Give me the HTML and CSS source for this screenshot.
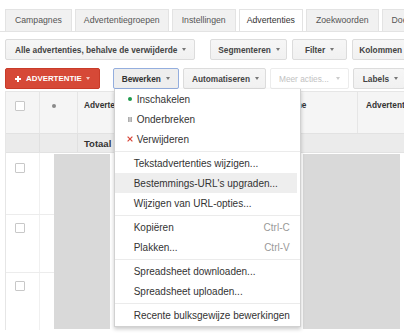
FILE: index.html
```html
<!DOCTYPE html>
<html lang="nl">
<head>
<meta charset="utf-8">
<link rel="stylesheet" href="styles.css">
</head>
<body>
<div class="page">
  <div class="tabs">
    <div class="tab">Campagnes</div>
    <div class="tab narrow">Advertentiegroepen</div>
    <div class="tab">Instellingen</div>
    <div class="tab active">Advertenties</div>
    <div class="tab">Zoekwoorden</div>
    <div class="tab">Doelgroepen</div>
  </div>

  <div class="toolbar first">
    <div class="btn b-alle">Alle advertenties, behalve de verwijderde<span class="caret"></span></div>
    <div class="btn b-seg spaced">Segmenteren<span class="caret"></span></div>
    <div class="btn b-filter">Filter<span class="caret"></span></div>
    <div class="btn b-kol">Kolommen<span class="caret"></span></div>
  </div>

  <div class="toolbar second">
    <div class="btn red"><svg class="plus" width="6" height="6" viewBox="0 0 6 6"><rect x="2" y="0" width="2" height="6" fill="#fff"/><rect x="0" y="2" width="6" height="2" fill="#fff"/></svg>ADVERTENTIE<span class="caret light"></span></div>
    <div class="dd spaced">
      <div class="btn selected">Bewerken<span class="caret"></span></div>
      <div class="menu">
        <div class="item ic"><span class="ico"><svg width="4" height="4" viewBox="0 0 4 4"><circle cx="2" cy="2" r="2" fill="#1e9a4c"/></svg></span>Inschakelen</div>
        <div class="item ic"><span class="ico"><svg width="4" height="5" viewBox="0 0 4 5"><rect x="0.3" y="0" width="1.2" height="5" fill="#8a8a8a"/><rect x="2.5" y="0" width="1.2" height="5" fill="#8a8a8a"/></svg></span>Onderbreken</div>
        <div class="item ic"><span class="ico x"><svg width="6" height="6" viewBox="0 0 6 6"><path d="M0.6 0.6 L5.4 5.4 M5.4 0.6 L0.6 5.4" stroke="#d8473a" stroke-width="1.2" fill="none"/></svg></span>Verwijderen</div>
        <div class="sep"></div>
        <div class="item">Tekstadvertenties wijzigen...</div>
        <div class="item hover">Bestemmings-URL's upgraden...</div>
        <div class="item">Wijzigen van URL-opties...</div>
        <div class="sep"></div>
        <div class="item"><span class="lbl">Kopiëren</span><span class="key">Ctrl-C</span></div>
        <div class="item"><span class="lbl">Plakken...</span><span class="key">Ctrl-V</span></div>
        <div class="sep"></div>
        <div class="item">Spreadsheet downloaden...</div>
        <div class="item">Spreadsheet uploaden...</div>
        <div class="sep"></div>
        <div class="item">Recente bulksgewijze bewerkingen</div>
      </div>
    </div>
    <div class="btn b-auto">Automatiseren<span class="caret"></span></div>
    <div class="btn disabled">Meer acties...<span class="caret"></span></div>
    <div class="btn b-labels">Labels<span class="caret"></span></div>
  </div>

  <div class="table">
    <div class="thead">
      <div class="th c1"><span class="cb"></span></div>
      <div class="th c2"><span class="dot"></span></div>
      <div class="th c3">Advertentie</div>
      <div class="th c4">Campagne</div>
      <div class="th c5">Advertentiegroep</div>
    </div>
    <div class="total">
      <div class="tc c1"></div>
      <div class="tc c2"></div>
      <div class="tc c3">Totaal</div>
    </div>
    <div class="tbody">
      <div class="rows">
        <div class="row r1"><div class="td c1"><span class="cb"></span></div><div class="td c2s"></div></div>
        <div class="row r2"><div class="td c1"><span class="cb"></span></div><div class="td c2s"></div></div>
        <div class="row r3"><div class="td c1"><span class="cb"></span></div><div class="td c2s"></div></div>
      </div>
      <div class="ph ph-left"></div>
      <div class="blank"></div>
      <div class="ph ph-right"></div>
    </div>
  </div>
</div>
</body>
</html>
```

FILE: styles.css
```css
* { box-sizing: border-box; }
html, body {
  margin: 0;
  padding: 0;
  background: #fff;
}
body {
  width: 404px;
  height: 334px;
  overflow: hidden;
  font-family: "Liberation Sans", Arial, sans-serif;
  color: #444;
}
.page {
  width: 404px;
  height: 334px;
  overflow: hidden;
}

/* Tabs */
.tabs {
  display: flex;
  gap: 3px;
  margin-top: 9px;
  padding-left: 5px;
  height: 23px;
  border-bottom: 1px solid #e3e3e3;
  white-space: nowrap;
  overflow: hidden;
}
.tab {
  flex-shrink: 0;
  height: 22px;
  line-height: 21px;
  padding: 0 9px;
  font-size: 8.7px;
  color: #555;
  background: #f1f1f1;
  border: 1px solid #e3e3e3;
  border-bottom: none;
}
.tab.narrow { padding: 0 8px; }
.tab.active {
  background: #fff;
  color: #333;
  height: 23px;
  padding: 0 7px;
  margin-bottom: -1px;
}

/* Toolbars */
.toolbar {
  display: flex;
  gap: 5px;
  padding-left: 5px;
  height: 21px;
  white-space: nowrap;
}
.toolbar.first { margin-top: 7px; }
.toolbar.second { margin-top: 8px; gap: 4px; }
.spaced { margin-left: 9px; }
.toolbar.first .spaced { margin-left: 10px; }

.btn {
  flex-shrink: 0;
  display: flex;
  align-items: center;
  height: 21px;
  padding: 0 8px 0 9px;
  font-size: 8.3px;
  font-weight: bold;
  color: #444;
  background: linear-gradient(#f6f6f6, #f1f1f1);
  border: 1px solid #dcdcdc;
  border-radius: 2px;
}
.b-seg { padding: 0 6px 0 7px; }
.b-filter { padding: 0 12px 0 12px; }
.b-kol { padding: 0 8px 0 6px; }
.b-auto { padding: 0 6px 0 8px; }
.b-labels { padding: 0 6px 0 9px; }
.caret {
  display: inline-block;
  width: 0;
  height: 0;
  margin-left: 5px;
  border-left: 2.5px solid transparent;
  border-right: 2.5px solid transparent;
  border-top: 3px solid #777;
}
.caret.light { border-top-color: #f3c5bf; margin-left: 4px; }
.btn.red {
  background: #d64937;
  border-color: #c83b29;
  color: #fff;
  font-size: 7.9px;
  padding: 0 9px 0 9px;
}
.plus { margin-right: 5px; }
.btn.selected {
  background: #eeeeee;
  border-color: #94aede;
  color: #333;
  padding: 0 8px 0 8px;
}
.btn.disabled {
  background: #fff;
  border-color: #ececec;
  color: #c2c2c2;
  font-weight: normal;
  padding: 0 8px 0 8px;
}
.btn.disabled .caret { border-top-color: #ccc; margin-left: 7px; }

/* Dropdown menu */
.dd {
  position: relative;
  flex-shrink: 0;
}
.menu {
  position: absolute;
  top: 21px;
  left: 1px;
  width: 187px;
  z-index: 10;
  background: #fff;
  border: 1px solid rgba(0, 0, 0, 0.18);
  border-top: none;
  box-shadow: 0 2px 4px rgba(0, 0, 0, 0.22);
  padding: 0 0 1px;
  font-size: 10px;
  font-weight: normal;
  color: #333;
}
.item {
  display: flex;
  align-items: center;
  height: 20px;
  padding: 0 10px 0 19px;
}
.item.ic { padding-left: 12px; }
.ico {
  display: inline-flex;
  align-items: center;
  justify-content: center;
  width: 6px;
  margin-right: 4px;
}
.item.hover { background: #eeeeee; margin-right: 3px; }
.lbl { flex: 1; }
.key { color: #999; }
.sep {
  height: 1px;
  background: #ebebeb;
  margin: 2px 0 1px;
}

/* Table */
.table {
  margin-top: 2px;
  margin-left: 5px;
  border-left: 1px solid #e6e6e6;
  font-size: 8.3px;
  font-weight: bold;
  color: #333;
}
.thead {
  display: flex;
  height: 43px;
  background: #f5f5f5;
  border-top: 1px solid #e6e6e6;
  border-bottom: 1px solid #e2e2e2;
  white-space: nowrap;
}
.th {
  flex-shrink: 0;
  border-right: 1px solid #e6e6e6;
  padding-top: 9px;
  overflow: hidden;
}
.c1 { width: 34px; padding-left: 9px; }
.c2 { width: 38px; padding-left: 12px; }
.c3 { width: 180px; padding-left: 6px; }
.c4 { width: 100px; padding-left: 6px; }
.c5 { flex: 1; padding-left: 8px; border-right: none; }
.thead .c3, .thead .c4, .thead .c5 { padding-top: 8px; }
.cb {
  display: block;
  width: 10px;
  height: 10px;
  background: #fff;
  border: 1px solid #c8c8c8;
  border-radius: 1px;
}
.dot {
  display: block;
  width: 4px;
  height: 4px;
  margin-top: 3px;
  border-radius: 50%;
  background: #8a8a8a;
}
.total {
  display: flex;
  height: 19px;
  background: #ebebeb;
  border-bottom: 1px solid #e2e2e2;
  font-size: 9.5px;
}
.tc {
  flex-shrink: 0;
  display: flex;
  align-items: center;
  border-right: 1px solid #e0e0e0;
}
.total .c3 { border-right: none; }

.tbody {
  display: flex;
  height: 177px;
}
.rows {
  width: 48px;
  flex-shrink: 0;
  display: flex;
  flex-direction: column;
}
.row {
  display: flex;
  border-bottom: 1px solid #ececec;
}
.r1 { height: 62px; }
.r2 { height: 58px; }
.r3 { height: 57px; border-bottom: none; }
.td.c1 {
  border-right: 1px solid #f0f0f0;
  padding-top: 10px;
}
.r2 .td.c1 { padding-top: 8px; }
.r3 .td.c1 { padding-top: 8px; }
.c2s { width: 14px; }
.ph {
  flex-shrink: 0;
  background: #d9d9d9;
  margin-top: 1px;
  margin-bottom: 1px;
}
.ph-left { width: 56px; }
.blank { width: 193px; flex-shrink: 0; }
.ph-right { width: 97px; }
```
